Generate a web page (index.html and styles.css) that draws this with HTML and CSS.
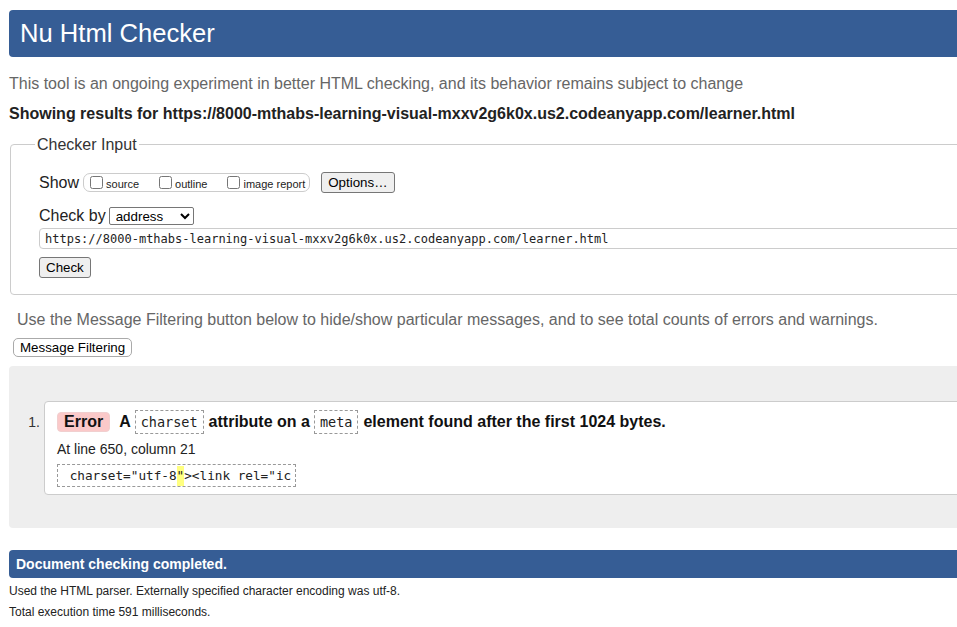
FILE: index.html
```html
<!DOCTYPE html>
<html lang="en">
<head>
<meta charset="utf-8">
<title>Showing results for learner.html - Nu Html Checker</title>
<link rel="stylesheet" href="styles.css">
</head>
<body>
<div class="page">
  <h1 class="masthead">Nu Html Checker</h1>
  <p class="tagline">This tool is an ongoing experiment in better HTML checking, and its behavior remains subject to change</p>
  <p class="results-for">Showing results for https://8000-mthabs-learning-visual-mxxv2g6k0x.us2.codeanyapp.com/learner.html</p>
  <form class="checker">
    <fieldset class="checker-input">
      <legend class="checker-legend">Checker Input</legend>
      <div class="row row-show">
        <span class="row-label">Show</span>
        <span class="show-pill">
          <label class="opt"><input type="checkbox" class="cb"><span class="opt-text">source</span></label>
          <label class="opt"><input type="checkbox" class="cb"><span class="opt-text">outline</span></label>
          <label class="opt opt-last"><input type="checkbox" class="cb"><span class="opt-text">image report</span></label>
        </span>
        <button type="button" class="btn btn-options">Options…</button>
      </div>
      <div class="row row-checkby">
        <span class="row-label">Check by</span>
        <select class="select"><option>address</option><option>file upload</option><option>text input</option></select>
      </div>
      <input class="url" type="text" value="https://8000-mthabs-learning-visual-mxxv2g6k0x.us2.codeanyapp.com/learner.html">
      <div class="row row-check"><button type="button" class="btn">Check</button></div>
    </fieldset>
  </form>
  <p class="filter-note">Use the Message Filtering button below to hide/show particular messages, and to see total counts of errors and warnings.</p>
  <button type="button" class="filter-btn">Message Filtering</button>
  <div class="results">
    <ol class="msg-list">
      <li class="msg">
        <span class="msg-num">1.</span>
        <div class="msg-box">
          <p class="msg-line">
            <strong class="badge">Error</strong>
            <span>A</span>
            <code class="code">charset</code>
            <span>attribute on a</span>
            <code class="code">meta</code>
            <span>element found after the first 1024 bytes.</span>
          </p>
          <p class="location">At line 650, column 21</p>
          <code class="extract"> charset="utf-8<mark class="hl">"</mark>&gt;&lt;link rel="ic</code>
        </div>
      </li>
    </ol>
  </div>
  <p class="done">Document checking completed.</p>
  <p class="meta-line">Used the HTML parser. Externally specified character encoding was utf-8.</p>
  <p class="meta-line meta-second">Total execution time 591 milliseconds.</p>
</div>
</body>
</html>
```

FILE: styles.css
```css
html, body {
  margin: 0;
  overflow: hidden;
  background: #fff;
}

body {
  font-family: "Liberation Sans", Arial, sans-serif;
  color: #222;
}

.page {
  width: 1020px;
  padding: 10px 0 0 9px;
}

.masthead {
  margin: 0;
  height: 47px;
  line-height: 47px;
  padding-left: 11px;
  background: #365d95;
  color: #fff;
  font-size: 25.6px;
  font-weight: normal;
  border-radius: 4px 0 0 4px;
}

.tagline {
  margin: 18px 0 0;
  font-size: 16px;
  line-height: 18px;
  color: #666;
}

.results-for {
  margin: 12px 0 0;
  font-size: 16px;
  line-height: 18px;
  font-weight: bold;
  color: #222;
}

.checker {
  margin: 12px 0 0 1px;
}

.checker-input {
  margin: 0;
  min-width: 0;
  padding: 18px 0 16px 28px;
  border: 1px solid #ccc;
  border-radius: 4px 0 0 4px;
}

.checker-legend {
  margin-left: -4px;
  padding: 0 2px;
  font-size: 16px;
  line-height: 19px;
  color: #333;
}

.row {
  display: flex;
  align-items: center;
}

.row-show {
  height: 21px;
}

.row-label {
  font-size: 16px;
  line-height: 18px;
  color: #222;
}

.show-pill {
  margin-left: 4px;
  display: flex;
  align-items: center;
  height: 19px;
  box-sizing: border-box;
  border: 1px solid #ccc;
  border-radius: 7px;
  padding: 0 4px 0 2px;
}

.opt {
  display: flex;
  align-items: center;
  margin-right: 16px;
}

.opt-last {
  margin-right: 0;
}

.cb {
  width: 13px;
  height: 13px;
  margin: 0 3px 0 4px;
}

.opt-text {
  font-size: 11px;
  line-height: 13px;
  padding-top: 3px;
  color: #222;
}

.btn {
  font-family: "Liberation Sans", Arial, sans-serif;
  font-size: 13.33px;
  line-height: 15px;
  height: 21px;
  box-sizing: border-box;
  padding: 2px 6px;
  border: 1px solid #767676;
  border-radius: 3px;
  background: #efefef;
  color: #000;
}

.btn-options {
  margin-left: 11px;
}

.row-checkby {
  margin-top: 14px;
  height: 18px;
}

.select {
  margin-left: 3px;
  width: 85px;
  height: 18px;
  box-sizing: border-box;
  padding: 0 0 0 2px;
  font-family: "Liberation Sans", Arial, sans-serif;
  font-size: 13.33px;
  border: 1px solid #767676;
  border-radius: 2px;
  background: #fff;
  color: #000;
}

.url {
  display: block;
  margin: 3px 0 0;
  width: 100%;
  height: 21px;
  box-sizing: border-box;
  border: 1px solid #ccc;
  border-radius: 4px 0 0 4px;
  padding: 0 0 0 5px;
  font-family: "DejaVu Sans Mono", "Liberation Mono", monospace;
  font-size: 12px;
  color: #222;
  background: #fff;
}

.row-check {
  margin-top: 8px;
}

.filter-note {
  margin: 16px 0 0;
  padding-left: 8px;
  font-size: 16px;
  line-height: 18px;
  color: #666;
}

.filter-btn {
  display: block;
  margin: 9px 0 0 4px;
  height: 19px;
  box-sizing: border-box;
  padding: 0 6px;
  font-family: "Liberation Sans", Arial, sans-serif;
  font-size: 13.33px;
  line-height: 17px;
  border: 1px solid #aaa;
  border-radius: 5px;
  background: #fff;
  color: #000;
}

.results {
  margin-top: 9px;
  background: #eee;
  border-radius: 4px 0 0 4px;
  padding: 35px 0 33px;
}

.msg-list {
  list-style: none;
  margin: 0;
  padding: 0;
}

.msg {
  display: flex;
  align-items: flex-start;
}

.msg-num {
  flex: none;
  width: 35px;
  box-sizing: border-box;
  padding-right: 4px;
  margin-top: 13px;
  text-align: right;
  font-size: 14px;
  line-height: 16px;
  color: #333;
}

.msg-box {
  flex: 1;
  background: #fff;
  border: 1px solid #ccc;
  border-radius: 4px 0 0 4px;
  padding: 8px 0 7px 12px;
}

.msg-line {
  margin: 0;
  display: flex;
  align-items: center;
  column-gap: 4px;
  height: 24px;
  font-size: 16px;
  font-weight: bold;
  color: #111;
}

.badge {
  display: block;
  margin-right: 5px;
  padding: 0 6px;
  line-height: 18px;
  border: 1px solid #f1cfcf;
  background: #fbc9c9;
  border-radius: 4px;
  color: #111;
}

.code {
  display: block;
  padding: 0 5px;
  margin-right: 1px;
  line-height: 22px;
  border: 1px dashed #999;
  font-family: "DejaVu Sans Mono", "Liberation Mono", monospace;
  font-size: 13.5px;
  font-weight: normal;
  color: #222;
}

.location {
  margin: 7px 0 0;
  font-size: 14px;
  line-height: 17px;
  color: #222;
}

.extract {
  display: inline-block;
  margin-top: 6px;
  height: 23px;
  box-sizing: border-box;
  padding: 0 4px;
  line-height: 21px;
  border: 1px dashed #999;
  font-family: "DejaVu Sans Mono", "Liberation Mono", monospace;
  font-size: 12.7px;
  white-space: pre;
  color: #222;
}

.hl {
  display: inline-block;
  line-height: 20px;
  background: #ffff80;
  color: #222;
}

.done {
  margin: 22px 0 0;
  height: 28px;
  line-height: 28px;
  padding-left: 7px;
  background: #365d95;
  color: #fff;
  font-size: 14px;
  font-weight: bold;
  border-radius: 4px 0 0 4px;
}

.meta-line {
  margin: 6px 0 0;
  font-size: 12px;
  line-height: 15px;
  color: #222;
}

.meta-second {
  margin-top: 6px;
}
```
